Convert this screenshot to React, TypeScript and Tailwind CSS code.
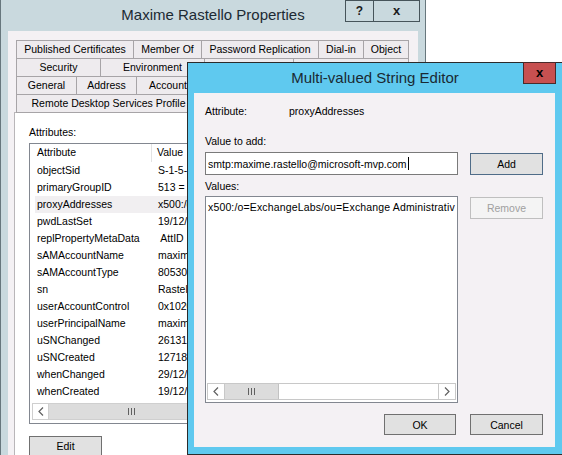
import React from 'react';

type Tab = { label: string; w: string };

// labels left empty where the tab sits entirely behind the dialog
const tabRows: Tab[][] = [
  [
    { label: 'Published Certificates', w: 'w-[118px]' },
    { label: 'Member Of', w: 'w-[69px]' },
    { label: 'Password Replication', w: 'w-[118px]' },
    { label: 'Dial-in', w: 'w-[46px]' },
    { label: 'Object', w: 'w-[46px]' },
  ],
  [
    { label: 'Security', w: 'w-[85px]' },
    { label: 'Environment', w: 'w-[105px]' },
    { label: '', w: 'w-[90px]' },
    { label: '', w: 'w-[116px]' },
  ],
  [
    { label: 'General', w: 'w-[61px]' },
    { label: 'Address', w: 'w-[61px]' },
    { label: 'Account', w: 'w-[64px]' },
    { label: '', w: 'w-[51px]' },
    { label: '', w: 'w-[73px]' },
    { label: '', w: 'w-[88px]' },
  ],
  [
    { label: 'Remote Desktop Services Profile', w: 'w-[185px]' },
    { label: '', w: 'w-[61px]' },
    { label: '', w: 'w-[149px]' },
  ],
];

const attributes: [string, string][] = [
  ['objectSid', 'S-1-5-21'],
  ['primaryGroupID', '513 = ('],
  ['proxyAddresses', 'x500:/o'],
  ['pwdLastSet', '19/12/20'],
  ['replPropertyMetaData', ' AttID'],
  ['sAMAccountName', 'maxime'],
  ['sAMAccountType', '805306'],
  ['sn', 'Rastello'],
  ['userAccountControl', '0x10200'],
  ['userPrincipalName', 'maxime@'],
  ['uSNChanged', '261315'],
  ['uSNCreated', '127183'],
  ['whenChanged', '29/12/20'],
  ['whenCreated', '19/12/20'],
];

function Grip() {
  return (
    <span className="flex gap-[2px]">
      <span className="w-px h-[7px] bg-[#606060]" />
      <span className="w-px h-[7px] bg-[#606060]" />
      <span className="w-px h-[7px] bg-[#606060]" />
    </span>
  );
}

function Chevron({ dir }: { dir: 'left' | 'right' }) {
  return (
    <svg width="6" height="9" viewBox="0 0 6 9">
      <path
        d={dir === 'left' ? 'M5 0.5 L1 4.5 L5 8.5' : 'M1 0.5 L5 4.5 L1 8.5'}
        fill="none"
        stroke="#606060"
        strokeWidth="1.2"
      />
    </svg>
  );
}

function PropertiesWindow() {
  return (
    <div className="w-[426px] h-[470px] bg-[#c9d9de] border-x border-[#67777d] flex flex-col">
      {/* title bar */}
      <div className="relative h-[31px] shrink-0 flex items-center justify-center">
        <span className="text-[15px] text-[#1c2a33]">Maxime Rastello Properties</span>
        <div className="absolute right-[5px] top-0 flex">
          <div className="w-[29px] h-[22px] border border-[#46545a] flex items-center justify-center font-bold text-[12px] text-[#1b1b1b]">
            ?
          </div>
          <div className="-ml-px w-[47px] h-[22px] border border-[#46545a] flex items-center justify-center font-bold text-[13px] text-[#1b1b1b] leading-none pb-[2px]">
            x
          </div>
        </div>
      </div>

      {/* client area */}
      <div className="mx-[7px] flex-1 min-h-0 overflow-hidden bg-[#f4f1f4] px-[6px] pt-[9px]">
        <div className="ml-[2px] flex flex-col">
          {tabRows.map((row, i) => (
            <div key={i} className={`flex ${i === 0 ? '' : '-mt-px'}`}>
              {row.map((t, j) => (
                <div
                  key={j}
                  className={`${t.w} ${j === 0 ? '' : '-ml-px'} h-[19px] shrink-0 border border-[#a7a4a7] bg-[#eeebee] flex items-center justify-center whitespace-nowrap overflow-hidden text-black`}
                >
                  {t.label}
                </div>
              ))}
            </div>
          ))}
        </div>

        {/* tab panel */}
        <div className="-mt-px w-[397px] h-[360px] bg-white border border-[#b9b6b9] pt-[13px] px-[14px]">
          <div className="leading-[12px] text-black">Attributes:</div>
          <div className="mt-[5px] h-[281px] border border-[#828790] flex flex-col">
            <div className="h-[18px] flex items-center">
              <div className="w-[122px] h-full flex items-center pl-[7px] border-r border-[#e3e3e3]">Attribute</div>
              <div className="pl-[5px]">Value</div>
            </div>
            {attributes.map(([name, value]) => (
              <div
                key={name}
                className={`h-[17px] flex items-center ${name === 'proxyAddresses' ? 'ml-[5px] bg-[#f1eff1]' : ''}`}
              >
                <div className={`shrink-0 ${name === 'proxyAddresses' ? 'pl-[2px] w-[117px]' : 'pl-[7px] w-[122px]'}`}>
                  {name}
                </div>
                <div className="pl-[6px] whitespace-pre">{value}</div>
              </div>
            ))}
            <div className="mt-[3px] mx-[2px] h-[17px] flex border border-[#cfcfcf]">
              <div className="w-[16px] bg-white border-r border-[#cfcfcf] flex items-center justify-center">
                <Chevron dir="left" />
              </div>
              <div className="w-[166px] bg-[#dcdcdc] border-r border-[#c5c5c5] flex items-center justify-center">
                <Grip />
              </div>
              <div className="flex-1 bg-[#f0f0f0]" />
            </div>
          </div>
          <div className="mt-[12px] w-[73px] h-[22px] bg-[#e1e1e1] border border-[#707070] flex items-center justify-center">
            Edit
          </div>
        </div>
      </div>
    </div>
  );
}

function StringEditor() {
  return (
    <div className="absolute left-[187px] top-[62px] w-[376px] h-[393px] border border-[#2b2b2b] bg-[#5fc9ef] flex flex-col">
      <div className="relative h-[30px] shrink-0 flex items-center justify-center">
        <span className="text-[15px] text-[#1a2a33]">Multi-valued String Editor</span>
        <div className="absolute right-[6px] -top-px w-[33px] h-[22px] bg-[#c75050] border border-[#4a2a2a] flex items-center justify-center font-bold text-[13px] text-black leading-none pb-[2px]">
          x
        </div>
      </div>

      <div className="ml-[6px] w-[361px] h-[354px] shrink-0 bg-[#f4f1f4] px-[11px] pt-[12px] flex flex-col leading-[12px] text-black">
        <div className="flex">
          <span className="w-[84px]">Attribute:</span>
          <span>proxyAddresses</span>
        </div>
        <div className="mt-[18px]">Value to add:</div>
        <div className="mt-[5px] flex items-start">
          <div className="w-[253px] h-[23px] bg-white border border-[#7a7a7a] flex items-center pl-[2px]">
            <span>smtp:maxime.rastello@microsoft-mvp.com</span>
            <span className="ml-px w-px h-[13px] bg-black" />
          </div>
          <div className="ml-[12px] mt-px w-[73px] h-[22px] bg-[#e1e1e1] border border-[#4f6c88] flex items-center justify-center">
            Add
          </div>
        </div>
        <div className="mt-[5px]">Values:</div>
        <div className="mt-[4px] flex items-start">
          <div className="w-[253px] h-[207px] bg-white border border-[#828790] flex flex-col">
            <div className="flex-1 pl-[2px] pt-[4px] whitespace-nowrap overflow-hidden tracking-[0.15px]">
              x500:/o=ExchangeLabs/ou=Exchange Administrativ
            </div>
            <div className="mx-px mb-[2px] h-[17px] flex border border-[#c8c8c8]">
              <div className="w-[17px] border-r border-[#c8c8c8] flex items-center justify-center">
                <Chevron dir="left" />
              </div>
              <div className="w-[54px] bg-[#dcdcdc] border-r border-[#c2c2c2] flex items-center justify-center">
                <Grip />
              </div>
              <div className="flex-1" />
              <div className="w-[17px] border-l border-[#c8c8c8] flex items-center justify-center">
                <Chevron dir="right" />
              </div>
            </div>
          </div>
          <div className="ml-[12px] mt-px w-[73px] h-[22px] bg-[#f4f4f4] border border-[#bfbfbf] text-[#a0a0a0] flex items-center justify-center">
            Remove
          </div>
        </div>
        <div className="mt-[11px] flex justify-end gap-[14px] pr-[1px]">
          <div className="w-[72px] h-[21px] bg-[#e1e1e1] border border-[#707070] flex items-center justify-center">
            OK
          </div>
          <div className="w-[73px] h-[21px] bg-[#e1e1e1] border border-[#707070] flex items-center justify-center">
            Cancel
          </div>
        </div>
      </div>
    </div>
  );
}

export default function App() {
  return (
    <div className="relative w-[562px] h-[455px] overflow-hidden bg-white font-['Liberation_Sans',Arial,sans-serif] text-[10.5px] text-black">
      <PropertiesWindow />
      <StringEditor />
    </div>
  );
}
